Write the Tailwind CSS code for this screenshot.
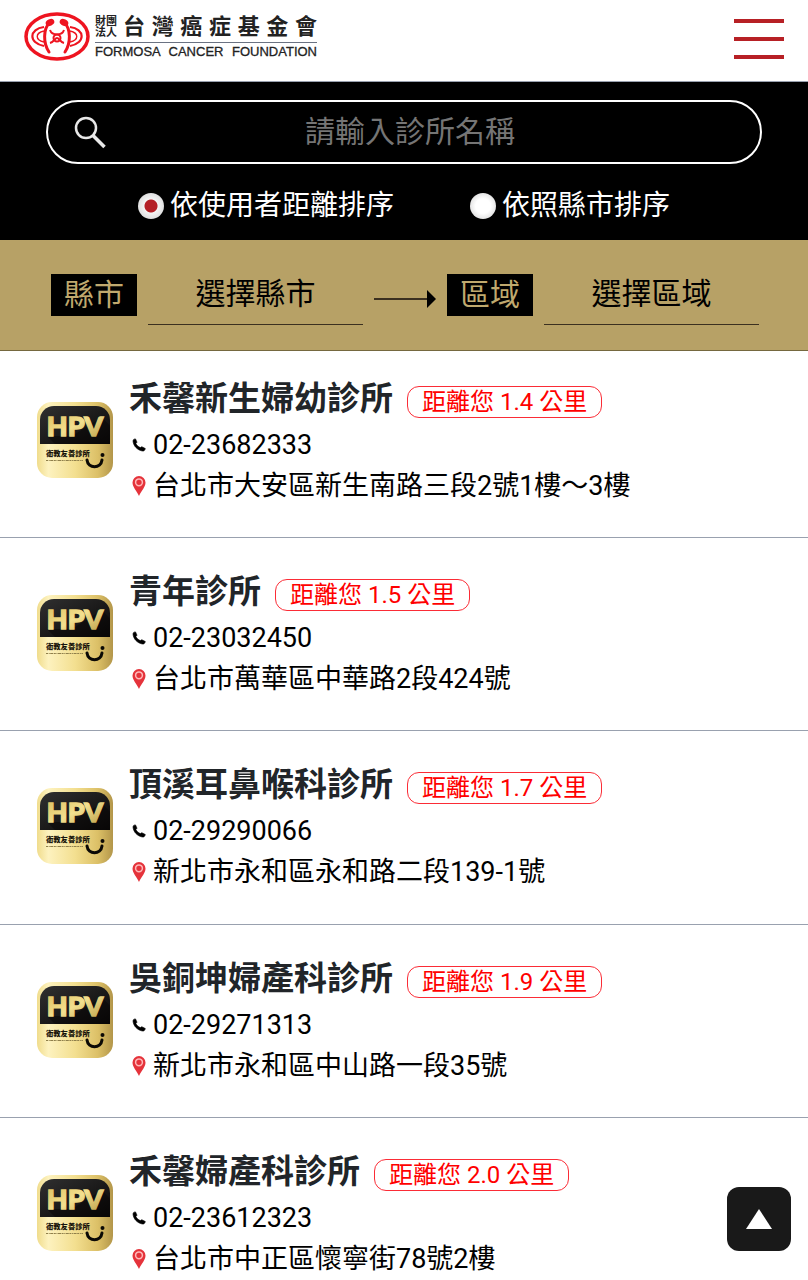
<!DOCTYPE html>
<html lang="zh-Hant">
<head>
<meta charset="utf-8">
<meta name="viewport" content="width=device-width, initial-scale=1">
<title>台灣癌症基金會</title>
<script src="https://cdn.jsdelivr.net/npm/@tailwindcss/browser@4"></script>
</head>
<body class="h-screen overflow-x-hidden bg-white font-[Roboto,'Noto_Sans_CJK_TC',sans-serif] text-black [scrollbar-width:none]">

<svg class="absolute size-0" aria-hidden="true">
  <defs>
    <linearGradient id="gold" x1="0" y1="0" x2="1" y2="0">
      <stop offset="0" stop-color="#f0dc8c"/><stop offset="0.15" stop-color="#fdf2bf"/><stop offset="0.5" stop-color="#f3df90"/><stop offset="0.8" stop-color="#dcc067"/><stop offset="1" stop-color="#b3964a"/>
    </linearGradient>
    <linearGradient id="goldText" x1="0" y1="0" x2="1" y2="1">
      <stop offset="0" stop-color="#d9bb5a"/><stop offset="0.5" stop-color="#f3e08f"/><stop offset="1" stop-color="#b59740"/>
    </linearGradient>
    <linearGradient id="dark" x1="0" y1="0" x2="1" y2="1">
      <stop offset="0" stop-color="#303030"/><stop offset="0.5" stop-color="#1c1b1b"/><stop offset="1" stop-color="#080606"/>
    </linearGradient>
    <symbol id="hpv" viewBox="0 0 76 76">
      <rect width="76" height="76" rx="15" fill="url(#gold)"/>
      <path d="M3 42V18A14 14 0 0 1 17 4H59A14 14 0 0 1 73 18V42Z" fill="url(#dark)"/>
      <path d="M10 34L18 42H73V24L65 15L35 34Z" fill="#080606" opacity=".5"/>
      <text x="38" y="34" text-anchor="middle" font-family="Lato, sans-serif" font-weight="900" font-size="27" fill="url(#goldText)" stroke="url(#goldText)" stroke-width="1.400">HPV</text>
      <text x="9" y="54" font-family="Noto Sans CJK TC, sans-serif" font-weight="900" font-size="7.3" fill="#17130a">衛教友善診所</text>
      <path d="M9 58.500H46" stroke="#8f7f4a" stroke-width="1" stroke-dasharray="2 .7 1 .5 3 .6"/>
      <path d="M50 58C51 67 64 67 65 58" fill="none" stroke="#0b0905" stroke-width="3" stroke-linecap="round"/>
      <circle cx="65.500" cy="53" r="2" fill="#0b0905"/>
    </symbol>
    <symbol id="phone" viewBox="0 0 14 14">
      <path d="M1 3C1 1.500 2.200.8 3.500.9L5 4.200 3.900 5.500C4.800 7.300 6.300 8.800 8.300 9.600L9.800 8.700 13.300 10.500C13 12.300 12 13.300 10.300 13 5.500 12.200 1.300 8 1 3Z" fill="#000" stroke="#000" stroke-width=".6" stroke-linejoin="round"/>
    </symbol>
    <symbol id="pin" viewBox="0 0 14 20">
      <path d="M7 0A6.500 6.500 0 0 0 .5 6.500C.5 11 4.500 14.500 7 20 9.500 14.500 13.500 11 13.500 6.500A6.500 6.500 0 0 0 7 0Z" fill="#e5333b"/>
      <circle cx="7" cy="6.300" r="3.400" fill="#e5333b" stroke="#ffb9b9" stroke-width="1.500"/>
    </symbol>
  </defs>
</svg>

<header class="flex h-[82px] items-start justify-between border-b border-gray-400 px-6">
  <a href="#" class="mt-3 flex items-center gap-[5px]" aria-label="台灣癌症基金會">
    <svg class="h-[49px] w-[66px]" viewBox="0 0 66 49" fill="none" stroke="#ee1420">
      <ellipse cx="33" cy="24.500" rx="31" ry="22.500" stroke-width="3.500"/>
      <path d="M26 10C19 17 19 31 25 40M40 10C47 17 47 31 41 40" stroke-width="3" stroke-linecap="round"/>
      <path d="M20 15C5 17 4 31 20 34M46 15C61 17 62 31 46 34" stroke-width="2.200"/>
      <path d="M20 19C11 21 11 28 20 30M46 19C55 21 55 28 46 30" stroke-width="1.400"/>
      <path d="M26 18C28 24 38 24 40 18M26 31C30 30 31 26 33 26C35 26 36 30 40 31" stroke-width="2"/>
      <circle cx="33" cy="26" r="3.500" stroke-width="2"/>
      <ellipse cx="26" cy="10.500" rx="4.500" ry="3.200" transform="rotate(-25 26 10.500)" fill="#ee1420" stroke="none"/><ellipse cx="40" cy="10.500" rx="4.500" ry="3.200" transform="rotate(25 40 10.500)" fill="#ee1420" stroke="none"/>
    </svg>
    <span class="flex w-[222px] flex-col text-[#222]">
      <span class="flex items-center gap-1 border-b border-gray-500 pb-px">
        <span class="w-6 text-[11px] font-bold leading-[11px]">財團法人</span>
        <span class="flex-1 text-[22px] font-bold leading-[28px] [text-align-last:justify]">台灣癌症基金會</span>
      </span>
      <span class="whitespace-nowrap font-['Liberation_Sans',sans-serif] text-[13px] leading-[18px] [-webkit-text-stroke:0.3px_#222] [text-align-last:justify]">FORMOSA CANCER FOUNDATION</span>
    </span>
  </a>
  <button type="button" aria-label="選單" class="mt-[19px] flex w-[50px] flex-col gap-[14px]">
    <span class="h-1 w-full bg-[#b72025]"></span>
    <span class="h-1 w-full bg-[#b72025]"></span>
    <span class="h-1 w-full bg-[#b72025]"></span>
  </button>
</header>

<form>
  <section class="h-[158px] bg-black px-[46px] pt-[18px] text-white">
    <label class="flex h-[64px] items-center rounded-full border-2 border-white px-6">
      <svg class="size-9 shrink-0" viewBox="0 0 36 36" fill="none" stroke="#e8e8e8"><circle cx="14" cy="14" r="10" stroke-width="2.500"/><path d="M21 21.500L32.500 33" stroke-width="3.500"/></svg>
      <input type="text" aria-label="診所名稱" placeholder="請輸入診所名稱" class="min-w-0 flex-1 pr-6 text-center text-[30px] leading-10 outline-none placeholder:text-[#757575]">
    </label>
    <div class="mt-[21px] flex justify-center gap-[76px] text-[28px] leading-[42px]">
      <label class="flex items-center gap-[6px]"><input type="radio" name="sort" checked class="size-[26px] appearance-none rounded-full bg-[radial-gradient(circle,#fff_40%,#ccc)] checked:bg-[radial-gradient(circle,#b41f25_6px,#f4f4f4_7px,#ccc)]">依使用者距離排序</label>
      <label class="flex items-center gap-[6px]"><input type="radio" name="sort" class="size-[26px] appearance-none rounded-full bg-[radial-gradient(circle,#fff_40%,#ccc)] checked:bg-[radial-gradient(circle,#b41f25_6px,#f4f4f4_7px,#ccc)]">依照縣市排序</label>
    </div>
  </section>

  <section class="flex h-[111px] items-start gap-[11px] border-b border-[#75683f] bg-[#b7a166] pl-[51px] pr-[49px] pt-[30px] text-[30px]">
    <label for="city" class="mt-1 bg-black px-[13px] leading-[42px] text-[#c0a96e]">縣市</label>
    <select id="city" class="h-[55px] min-w-0 flex-1 appearance-none border-b border-[#3b3020] pb-2 [text-align-last:center]"><option>選擇縣市</option></select>
    <svg class="mt-5 h-[18px] w-[62px] shrink-0" viewBox="0 0 62 18"><path d="M0 9H54" stroke="#3b3020" stroke-width="2"/><path d="M53 0L62 9L53 18Z"/></svg>
    <label for="area" class="mt-1 bg-black px-[13px] leading-[42px] text-[#c0a96e]">區域</label>
    <select id="area" class="h-[55px] min-w-0 flex-1 appearance-none border-b border-[#3b3020] pb-2 [text-align-last:center]"><option>選擇區域</option></select>
  </section>
</form>

<main class="-mt-[6px]">
  <article class="flex h-[193px] gap-4 border-b border-gray-400 px-[37px] pt-8">
    <svg class="mt-[25px] size-[76px] shrink-0" role="img" aria-label="HPV 衛教友善診所"><use href="#hpv"/></svg>
    <div>
      <div class="flex items-center gap-[14px]"><h2 class="text-[33px] font-bold leading-[44px] text-[#212529]">禾馨新生婦幼診所</h2><span class="mt-[6px] rounded-xl border border-red-500 px-[14px] text-[24px] leading-[30px] text-[#f00]">距離您 1.4 公里</span></div>
      <p class="mt-1 flex items-center gap-[7px] pl-[3px] text-[27px] leading-10"><svg class="size-[14px]"><use href="#phone"/></svg><a href="tel:02-23682333">02-23682333</a></p>
      <p class="flex items-center gap-[7px] pl-[3px] text-[27px] leading-[42px]"><svg class="h-5 w-[14px]"><use href="#pin"/></svg>台北市大安區新生南路三段2號1樓～3樓</p>
    </div>
  </article>
  <article class="flex h-[193px] gap-4 border-b border-gray-400 px-[37px] pt-8">
    <svg class="mt-[25px] size-[76px] shrink-0" role="img" aria-label="HPV 衛教友善診所"><use href="#hpv"/></svg>
    <div>
      <div class="flex items-center gap-[14px]"><h2 class="text-[33px] font-bold leading-[44px] text-[#212529]">青年診所</h2><span class="mt-[6px] rounded-xl border border-red-500 px-[14px] text-[24px] leading-[30px] text-[#f00]">距離您 1.5 公里</span></div>
      <p class="mt-1 flex items-center gap-[7px] pl-[3px] text-[27px] leading-10"><svg class="size-[14px]"><use href="#phone"/></svg><a href="tel:02-23032450">02-23032450</a></p>
      <p class="flex items-center gap-[7px] pl-[3px] text-[27px] leading-[42px]"><svg class="h-5 w-[14px]"><use href="#pin"/></svg>台北市萬華區中華路2段424號</p>
    </div>
  </article>
  <article class="flex h-[194px] gap-4 border-b border-gray-400 px-[37px] pt-8">
    <svg class="mt-[25px] size-[76px] shrink-0" role="img" aria-label="HPV 衛教友善診所"><use href="#hpv"/></svg>
    <div>
      <div class="flex items-center gap-[14px]"><h2 class="text-[33px] font-bold leading-[44px] text-[#212529]">頂溪耳鼻喉科診所</h2><span class="mt-[6px] rounded-xl border border-red-500 px-[14px] text-[24px] leading-[30px] text-[#f00]">距離您 1.7 公里</span></div>
      <p class="mt-1 flex items-center gap-[7px] pl-[3px] text-[27px] leading-10"><svg class="size-[14px]"><use href="#phone"/></svg><a href="tel:02-29290066">02-29290066</a></p>
      <p class="flex items-center gap-[7px] pl-[3px] text-[27px] leading-[42px]"><svg class="h-5 w-[14px]"><use href="#pin"/></svg>新北市永和區永和路二段139-1號</p>
    </div>
  </article>
  <article class="flex h-[193px] gap-4 border-b border-gray-400 px-[37px] pt-8">
    <svg class="mt-[25px] size-[76px] shrink-0" role="img" aria-label="HPV 衛教友善診所"><use href="#hpv"/></svg>
    <div>
      <div class="flex items-center gap-[14px]"><h2 class="text-[33px] font-bold leading-[44px] text-[#212529]">吳銅坤婦產科診所</h2><span class="mt-[6px] rounded-xl border border-red-500 px-[14px] text-[24px] leading-[30px] text-[#f00]">距離您 1.9 公里</span></div>
      <p class="mt-1 flex items-center gap-[7px] pl-[3px] text-[27px] leading-10"><svg class="size-[14px]"><use href="#phone"/></svg><a href="tel:02-29271313">02-29271313</a></p>
      <p class="flex items-center gap-[7px] pl-[3px] text-[27px] leading-[42px]"><svg class="h-5 w-[14px]"><use href="#pin"/></svg>新北市永和區中山路一段35號</p>
    </div>
  </article>
  <article class="flex h-[193px] gap-4 border-b border-gray-400 px-[37px] pt-8">
    <svg class="mt-[25px] size-[76px] shrink-0" role="img" aria-label="HPV 衛教友善診所"><use href="#hpv"/></svg>
    <div>
      <div class="flex items-center gap-[14px]"><h2 class="text-[33px] font-bold leading-[44px] text-[#212529]">禾馨婦產科診所</h2><span class="mt-[6px] rounded-xl border border-red-500 px-[14px] text-[24px] leading-[30px] text-[#f00]">距離您 2.0 公里</span></div>
      <p class="mt-1 flex items-center gap-[7px] pl-[3px] text-[27px] leading-10"><svg class="size-[14px]"><use href="#phone"/></svg><a href="tel:02-23612323">02-23612323</a></p>
      <p class="flex items-center gap-[7px] pl-[3px] text-[27px] leading-[42px]"><svg class="h-5 w-[14px]"><use href="#pin"/></svg>台北市中正區懷寧街78號2樓</p>
    </div>
  </article>
</main>

<button type="button" aria-label="回到頂端" class="fixed bottom-[29px] right-[17px] flex size-16 items-center justify-center rounded-xl bg-[#191919]">
  <svg class="h-5 w-[26px]" viewBox="0 0 26 20"><path d="M13 0L26 20H0Z" fill="#fff"/></svg>
</button>
</body>
</html>
